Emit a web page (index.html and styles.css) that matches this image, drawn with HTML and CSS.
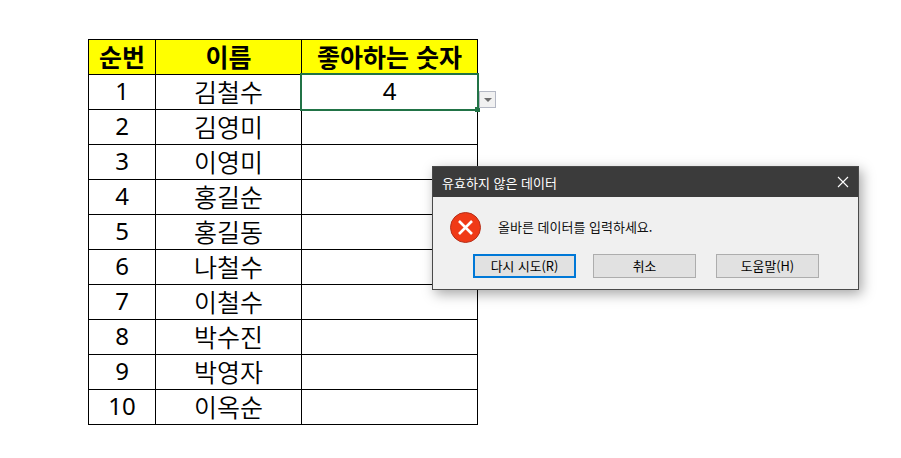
FILE: index.html
```html
<!DOCTYPE html>
<html lang="ko">
<head>
<meta charset="utf-8">
<title>유효하지 않은 데이터</title>
<link rel="stylesheet" href="styles.css">
</head>
<body>
<div class="sheet">
  <table class="grid">
    <colgroup><col class="c1"><col class="c2"><col class="c3"></colgroup>
    <thead><tr><th>순번</th><th>이름</th><th>좋아하는 숫자</th></tr></thead>
    <tbody>
      <tr><td class="num">1</td><td>김철수</td><td class="num">4</td></tr>
      <tr><td class="num">2</td><td>김영미</td><td></td></tr>
      <tr><td class="num">3</td><td>이영미</td><td></td></tr>
      <tr><td class="num">4</td><td>홍길순</td><td></td></tr>
      <tr><td class="num">5</td><td>홍길동</td><td></td></tr>
      <tr><td class="num">6</td><td>나철수</td><td></td></tr>
      <tr><td class="num">7</td><td>이철수</td><td></td></tr>
      <tr><td class="num">8</td><td>박수진</td><td></td></tr>
      <tr><td class="num">9</td><td>박영자</td><td></td></tr>
      <tr><td class="num">10</td><td>이옥순</td><td></td></tr>
    </tbody>
  </table>
  <div class="selection"><span class="handle"></span></div>
  <div class="dropdown"><span class="arrow"></span></div>
</div>
<div class="dialog" role="dialog">
  <div class="titlebar">
    <span class="title">유효하지 않은 데이터</span>
    <svg class="close" width="12" height="12" viewBox="0 0 12 12"><path d="M1 1L11 11M11 1L1 11" stroke="#fff" stroke-width="1.1" fill="none"/></svg>
  </div>
  <div class="body">
    <div class="message">
      <svg class="erricon" width="31" height="31" viewBox="0 0 31 31">
        <circle cx="15.5" cy="15.5" r="15" fill="#f03a17" stroke="#b5301a" stroke-width="1"/>
        <path d="M9 9L22 22M22 9L9 22" stroke="#fff" stroke-width="2.6" fill="none"/>
      </svg>
      <span>올바른 데이터를 입력하세요.</span>
    </div>
    <div class="buttons">
      <button class="btn primary">다시 시도(R)</button>
      <button class="btn">취소</button>
      <button class="btn">도움말(H)</button>
    </div>
  </div>
</div>
</body>
</html>
```
FILE: styles.css
```css
html, body { margin: 0; padding: 0; background: #fff; }
body { width: 901px; height: 458px; overflow: hidden; position: relative; font-family: "Noto Sans CJK KR", "Noto Sans", sans-serif; color: #000; }
.sheet { position: relative; width: 390px; margin: 39px 0 0 88px; }
.grid { border-collapse: collapse; table-layout: fixed; width: 390px; font-size: 25px; }
.c1 { width: 67px; }
.c2 { width: 146px; }
.c3 { width: 176px; }
.grid th, .grid td { border: 1px solid #000; height: 34px; padding: 0 0 2px; box-sizing: border-box; text-align: center; line-height: 32px; overflow: hidden; }
.grid tr { height: 35px; }
.grid th { background: #ff0; font-weight: 700; }
.grid td { font-weight: 350; }
.grid .num { font-family: "Noto Sans", sans-serif; font-size: 24px; font-weight: 400; }
.selection { position: absolute; left: 212px; top: 34px; width: 179px; height: 38px; border: 2px solid #217346; box-sizing: border-box; }
.handle { position: absolute; right: -3px; bottom: -3px; width: 5px; height: 5px; background: #217346; box-sizing: content-box; }
.dropdown { position: absolute; left: 391px; top: 52px; width: 17px; height: 17px; background: #f1f1f1; border: 1px solid #b4b8c4; box-sizing: border-box; display: flex; align-items: center; justify-content: center; }
.arrow { width: 0; height: 0; border-left: 4px solid transparent; border-right: 4px solid transparent; border-top: 4px solid #6d6d6d; }
.dialog { position: absolute; left: 432px; top: 166px; width: 427px; height: 124px; box-sizing: border-box; background: #f0f0f0; border: 1px solid #4a4a4a; box-shadow: 3px 4px 12px rgba(0,0,0,.35); display: flex; flex-direction: column; }
.titlebar { height: 30px; flex: none; background: #3b3b3b; color: #fff; display: flex; align-items: center; justify-content: space-between; padding: 0 9px 0 9px; font-size: 13px; }
.body { flex: 1; display: flex; flex-direction: column; }
.message { display: flex; align-items: center; gap: 17px; padding: 15px 0 0 17px; font-size: 13px; color: #111; height: 31px; }
.message span { position: relative; top: -1px; }
.buttons { display: flex; gap: 17px; padding: 11px 0 0 40px; }
.btn + .btn + .btn { margin-left: 3px; }
.btn { width: 103px; height: 24px; box-sizing: border-box; background: #e1e1e1; border: 1px solid #adadad; padding: 0 0 2px; font: 12.8px "Noto Sans CJK KR", sans-serif; color: #000; }
.primary { border: 2px solid #0078d7; }
```
